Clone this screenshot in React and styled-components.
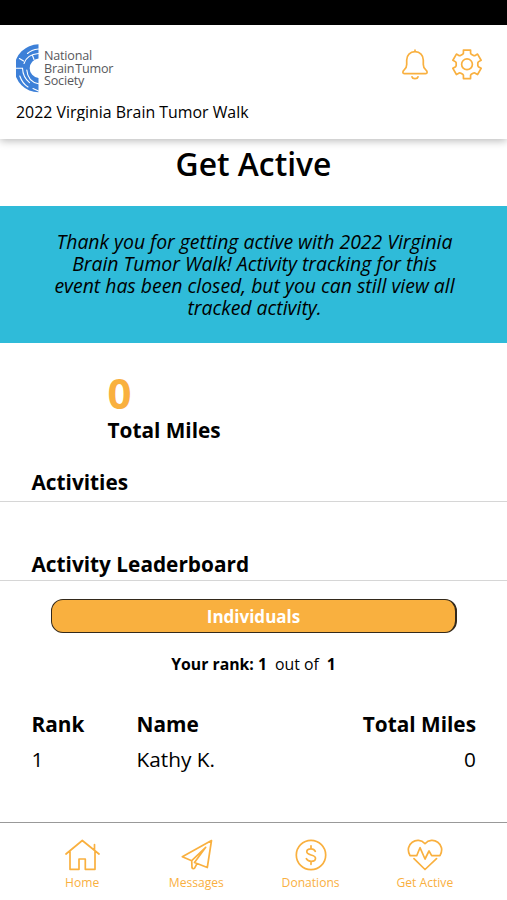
import React from 'react';
import styled, { createGlobalStyle } from 'styled-components';

const ORANGE = '#f9b03f';

const Global = createGlobalStyle`
  * { box-sizing: border-box; }
  body { margin: 0; background: #fff; color: #000; font-family: "Open Sans", "Noto Sans", sans-serif; }
`;

const Screen = styled.div`
  width: 507px;
  height: 900px;
  display: flex;
  flex-direction: column;
  overflow: hidden;
  background: #fff;
`;

const StatusBar = styled.div`
  height: 25px;
  flex: none;
  background: #000;
`;

const Header = styled.header`
  height: 114px;
  flex: none;
  padding: 17px 25px 0 16px;
  background: #fff;
  box-shadow: 0 2px 8px rgba(0, 0, 0, 0.27);
`;

const HeaderTop = styled.div`
  display: flex;
  justify-content: space-between;
  height: 59px;
`;

const Brand = styled.div`
  display: flex;
  gap: 5px;
  padding-top: 2px;
`;

const BrandName = styled.div`
  padding-top: 6px;
  font: 500 12.6px/12.6px "Open Sans", sans-serif;
  letter-spacing: -0.2px;
  word-spacing: -2px;
  color: #58585c;
  white-space: pre-line;
`;

const HeaderActions = styled.div`
  display: flex;
  gap: 23px;
  padding-top: 6px;
`;

const EventName = styled.div`
  height: 20px;
  overflow: hidden;
  font-size: 15.9px;
  line-height: 22px;
`;

const Main = styled.main`
  flex: 1;
`;

const Title = styled.h1`
  margin: 0;
  height: 67px;
  padding-top: 5px;
  text-align: center;
  font-size: 31.8px;
  font-weight: 600;
  line-height: 40px;
`;

const Notice = styled.p`
  margin: 0;
  height: 137px;
  padding: 25px 40px 0 42px;
  background: #2fbbd9;
  text-align: center;
  font-size: 19.4px;
  font-style: italic;
  line-height: 22px;
`;

const Stat = styled.section`
  height: 116px;
  padding: 26px 0 0 107.5px;
`;

const StatValue = styled.div`
  color: ${ORANGE};
  font-size: 42px;
  font-weight: 700;
  line-height: 48px;
`;

const StatLabel = styled.div`
  font-size: 20.8px;
  font-weight: 700;
  line-height: 26px;
`;

const SectionTitle = styled.h2`
  margin: 0;
  height: ${(p) => p.$height}px;
  padding: ${(p) => p.$top}px 31.5px 0;
  border-bottom: 1px solid #d6d6d6;
  font-size: 20.8px;
  font-weight: 700;
  line-height: 26px;
`;

const Tab = styled.button`
  display: block;
  width: 406px;
  height: 34px;
  margin: 18px 0 0 51px;
  padding: 0;
  border: 1.5px solid #33291b;
  border-right-width: 2px;
  border-radius: 12px;
  background: ${ORANGE};
  color: #fff;
  font: 700 17px/30px "Open Sans", sans-serif;
  padding-top: 1px;
`;

const RankLine = styled.div`
  display: flex;
  justify-content: center;
  gap: 8px;
  margin-top: 20px;
  font-size: 15.8px;
  line-height: 22px;
`;

const Table = styled.div`
  padding: 35px 31px 0 31.5px;
`;

const Row = styled.div`
  display: grid;
  grid-template-columns: 105px 1fr auto;
  height: 35px;
  font-size: 20.8px;
  line-height: 28px;
  font-weight: ${(p) => (p.$head ? 700 : 400)};
`;

const Nav = styled.nav`
  display: flex;
  flex: none;
  height: 78px;
  padding: 15px 25px 0;
  border-top: 1px solid #999;
`;

const NavItem = styled.a`
  flex: 1;
  display: flex;
  flex-direction: column;
  align-items: center;
  color: ${ORANGE};
  font-size: 12.1px;
  line-height: 17px;
`;

const Icon = styled.svg`
  display: block;
  width: ${(p) => p.$w}px;
  height: ${(p) => p.$h}px;
  fill: none;
  stroke: ${ORANGE};
  stroke-width: 1.7;
  stroke-linejoin: round;
  stroke-linecap: round;
`;

const NavIcon = styled(Icon).attrs({ $w: 36, $h: 36, viewBox: '0 0 36 36' })``;

const Logo = () => (
  <svg width="23" height="49" viewBox="0 0 23 49">
    <path d="M22.500 .3A24 24 0 0 0 22.500 48.300V34A9.800 9.800 0 0 1 22.500 14.500Z" fill="#3d80d8" />
    <g fill="none" stroke="#fff" strokeWidth="1.100" strokeLinecap="round">
      <path d="M22.500 5C17.500 5.500 14 7 11.500 9.500" />
      <path d="M22.500 9.500C16 10 10 13.500 8 19.500" />
      <path d="M3.400 14.500L7.600 17" />
      <path d="M16.500 11.500L18 15.500" />
      <path d="M0 24.300H6.500C6.800 30.500 9.500 35.500 13.500 38.600" />
      <path d="M3.800 32C5.500 37 8 40.500 12 43" />
      <path d="M10.800 26C11.400 33 15.500 38.500 22.500 39.700" />
      <path d="M17 44.500L22.500 47" />
    </g>
  </svg>
);

const Bell = () => (
  <Icon $w={28} $h={32} viewBox="0 0 28 32">
    <path d="M14 2.200v1.500M14 3.700c-5 0-8.300 3.500-8.300 8.300v4.500c0 2.800-1 4.200-2.500 5.400-2 1.700-1.600 3.800.2 3.800h21.200c1.800 0 2.200-2.100.2-3.800-1.500-1.200-2.500-2.600-2.500-5.400v-4.500c0-4.800-3.300-8.300-8.300-8.300zM11 28.800c.6 2.500 5.400 2.500 6 0" />
  </Icon>
);

// Six-toothed cog: each tooth is flanked by a valley on the smaller radius.
const gearPoints = Array.from({ length: 6 }, (_, tooth) =>
  [[-23, 10.9], [-18, 11.6], [-14, 14.7], [14, 14.7], [18, 11.6], [23, 10.9]].map(([offset, r]) => {
    const a = ((tooth * 60 - 90 + offset) * Math.PI) / 180;
    return `${(15 + r * Math.cos(a)).toFixed(2)},${(16.3 + r * Math.sin(a)).toFixed(2)}`;
  }).join(' ')
).join(' ');

const Gear = () => (
  <Icon $w={30} $h={32} viewBox="0 0 30 32">
    <polygon points={gearPoints} />
    <circle cx="15" cy="16.300" r="5.400" />
  </Icon>
);

const Home = () => (
  <NavIcon>
    <path d="M2 16L18.300 2.500L35 16M6 13.500v17.800h9V21h6.300v10.300H31V13.500M30.500 12V6.500" />
  </NavIcon>
);

const Plane = () => (
  <NavIcon>
    <path d="M33.500 2.500L4.300 18.700l9.400 4L27.700 9.300 16.500 24.500l12.800 5zM13.700 22.700l.3 7c.2 1.300 1.900 1.300 2.700.2l2.300-4.300" />
  </NavIcon>
);

const Dollar = () => (
  <NavIcon>
    <circle cx="18" cy="17" r="14.700" />
    <path d="M18 7.800v3M18 23.300v3M22.300 13.300c-.8-1.700-2.300-2.400-4.300-2.400-2.400 0-4.200 1-4.200 2.900 0 4.200 8.700 2.100 8.700 6.400 0 2-1.900 3.100-4.300 3.100-2.200 0-4-.8-4.900-2.600" />
  </NavIcon>
);

const Heart = () => (
  <NavIcon>
    <path d="M3 17.700C-3.500 6 10.500-2.500 18 5.700c7.500-8.200 21.500 .3 15 12h-8.300L22 13l-4 8L13 9.700 9.700 17.700zM7 20.700L18 31.500 29.500 20.700" />
  </NavIcon>
);

const NAV = [
  ['Home', Home],
  ['Messages', Plane],
  ['Donations', Dollar],
  ['Get Active', Heart],
];

export default function App() {
  return (
    <>
      <Global />
      <Screen>
        <StatusBar />
        <Header>
          <HeaderTop>
            <Brand>
              <Logo />
              <BrandName>{'National\nBrain Tumor\nSociety'}</BrandName>
            </Brand>
            <HeaderActions>
              <Bell />
              <Gear />
            </HeaderActions>
          </HeaderTop>
          <EventName>2022 Virginia Brain Tumor Walk</EventName>
        </Header>
        <Main>
          <Title>Get Active</Title>
          <Notice>
            Thank you for getting active with 2022 Virginia<br />
            Brain Tumor Walk! Activity tracking for this<br />
            event has been closed, but you can still view all<br />
            tracked activity.
          </Notice>
          <Stat>
            <StatValue>0</StatValue>
            <StatLabel>Total Miles</StatLabel>
          </Stat>
          <SectionTitle $height={43} $top={10}>Activities</SectionTitle>
          <SectionTitle $height={79} $top={49}>Activity Leaderboard</SectionTitle>
          <Tab>Individuals</Tab>
          <RankLine>
            <b>Your rank: 1</b>
            <span>out of</span>
            <b>1</b>
          </RankLine>
          <Table>
            <Row $head>
              <span>Rank</span>
              <span>Name</span>
              <span>Total Miles</span>
            </Row>
            <Row>
              <span>1</span>
              <span>Kathy K.</span>
              <span>0</span>
            </Row>
          </Table>
        </Main>
        <Nav>
          {NAV.map(([label, Glyph]) => (
            <NavItem key={label}>
              <Glyph />
              {label}
            </NavItem>
          ))}
        </Nav>
      </Screen>
    </>
  );
}
